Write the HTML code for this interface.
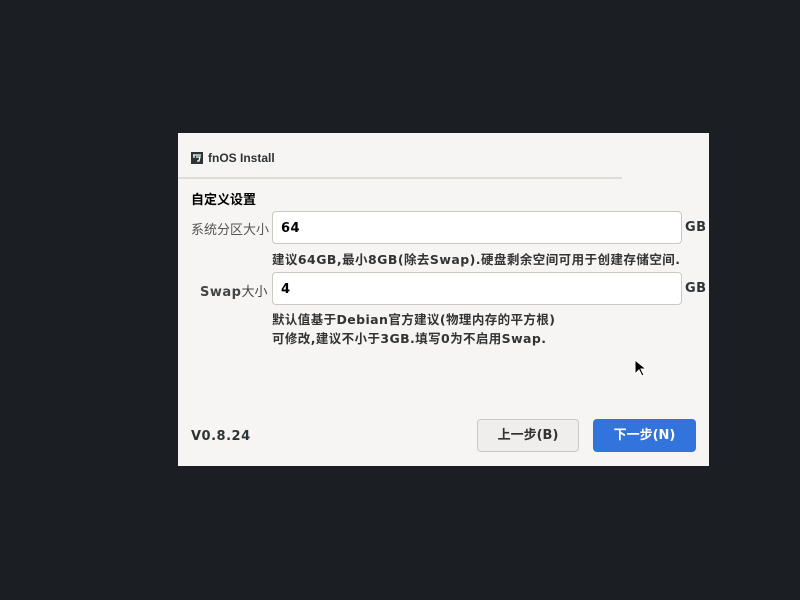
<!DOCTYPE html>
<html><head><meta charset="utf-8"><style>
body{margin:0;width:800px;height:600px;background:#1b1e23;position:relative;overflow:hidden;font-family:"DejaVu Sans","Noto Sans CJK SC",sans-serif;color:#2e3436}
.win{position:absolute;left:178px;top:133px;width:531px;height:333px;background:#f6f5f4}
.a{position:absolute;white-space:nowrap}
.inp{position:absolute;left:94px;width:408px;height:31px;background:#fff;border:1px solid #cdc7c2;border-radius:4px;font-weight:bold;font-size:13px;line-height:33px;text-indent:8px;color:#000;letter-spacing:0.5px}
.btn{position:absolute;top:286px;height:31px;border-radius:4px;font-size:13px;font-weight:bold;text-align:center;line-height:31px}
</style></head><body>
<div class="win">
<svg class="a" style="left:13px;top:19px" width="12" height="12"><rect width="12" height="12" fill="#2e3436"/><path d="M2 3h8M3 3v3M5 5h4l-1 4H6" stroke="#fff" stroke-width="1.3" fill="none"/></svg>
<div class="a" style="left:30px;top:18px;font-size:12px;font-weight:bold;font-family:'Liberation Sans',sans-serif">fnOS Install</div>
<div class="a" style="left:0;top:44px;width:444px;height:2px;background:#dfdcd8"></div>
<div class="a" style="left:13px;top:56px;font-size:13px;font-weight:bold;color:#000">自定义设置</div>
<div class="a" style="left:13px;top:86px;font-size:13px;color:#555">系统分区大小</div>
<div class="inp" style="top:78px">64</div>
<div class="a" style="left:507px;top:87px;font-size:13px;font-weight:bold;letter-spacing:0.5px">GB</div>
<div class="a" style="left:94px;top:116px;font-size:12.5px;font-weight:bold;color:#333;letter-spacing:0.45px">建议64GB,最小8GB(除去Swap).硬盘剩余空间可用于创建存储空间.</div>
<div class="a" style="left:22px;top:148px;font-size:13px;font-weight:bold;color:#444;letter-spacing:0.5px">Swap<span style="font-weight:normal;letter-spacing:0">大小</span></div>
<div class="inp" style="top:139px">4</div>
<div class="a" style="left:507px;top:148px;font-size:13px;font-weight:bold;letter-spacing:0.5px">GB</div>
<div class="a" style="left:94px;top:177px;font-size:12.5px;font-weight:bold;color:#333;line-height:19px;letter-spacing:0.4px">默认值基于Debian官方建议(物理内存的平方根)<br>可修改,建议不小于3GB.填写0为不启用Swap.</div>
<div class="a" style="left:13px;top:296px;font-size:13px;font-weight:bold;letter-spacing:0.5px">V0.8.24</div>
<div class="btn" style="left:299px;width:100px;background:#efeeec;border:1px solid #cdc7c2;color:#333">上一步(B)</div>
<div class="btn" style="left:415px;width:103px;top:286px;height:33px;line-height:33px;background:#3373dc;color:#fff">下一步(N)</div>
</div>
<svg class="a" style="left:634px;top:359px" width="12" height="18"><path d="M1 1v14l4-4 3 6 2-1-3-6h5z" fill="#000" stroke="#fff" stroke-width="1"/></svg>
</body></html>
